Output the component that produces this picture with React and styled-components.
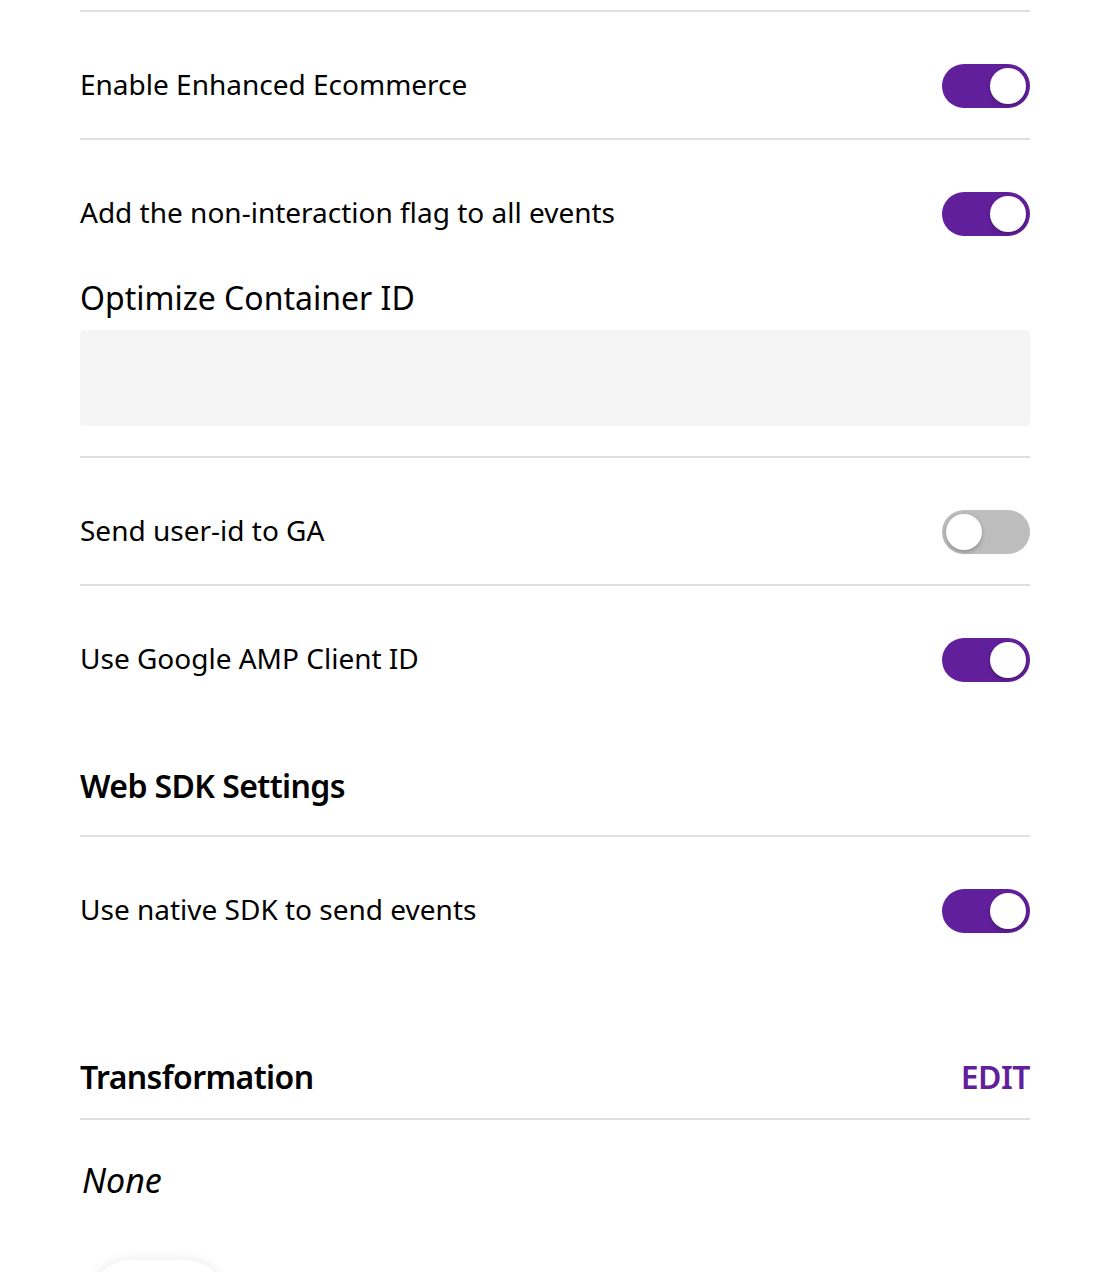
import React from "react";
import styled, { createGlobalStyle } from "styled-components";

const GlobalStyle = createGlobalStyle`
  body {
    margin: 0;
    background: #ffffff;
    font-family: "Noto Sans", "Open Sans", sans-serif;
    color: #000000;
    overflow: hidden;
  }
`;

const Page = styled.div`
  padding: 10px 66px 0 80px;
`;

const SettingRow = styled.div`
  display: flex;
  align-items: center;
  justify-content: space-between;
  border-top: 2px solid #e0e0e0;
  padding: 52px 0 30px;
`;

const SettingLabel = styled.span`
  font-size: 28px;
  line-height: 40px;
  padding-bottom: 4px;
`;

const Track = styled.button`
  position: relative;
  width: 88px;
  height: 44px;
  border: none;
  border-radius: 22px;
  padding: 0;
  cursor: pointer;
  background: ${(p) => (p.$on ? "#621f9c" : "#bdbdbd")};
  flex-shrink: 0;
`;

const Knob = styled.span`
  position: absolute;
  top: 4px;
  left: ${(p) => (p.$on ? "48px" : "4px")};
  width: 36px;
  height: 36px;
  border-radius: 50%;
  background: #ffffff;
  box-shadow: 0 2px 4px rgba(0, 0, 0, 0.25);
`;

const Field = styled.div`
  padding: 10px 0 30px;
`;

const FieldLabel = styled.label`
  display: block;
  font-size: 32px;
  line-height: 44px;
  margin-bottom: 10px;
`;

const TextInput = styled.input`
  display: block;
  box-sizing: border-box;
  width: 100%;
  height: 96px;
  border: none;
  border-radius: 4px;
  background: #f5f5f5;
  font-family: inherit;
  font-size: 28px;
  padding: 0 20px;
  outline: none;
`;

const SectionTitle = styled.h2`
  margin: 0;
  padding: ${(p) => p.$pad || "54px 0 29px"};
  font-size: 32px;
  line-height: 40px;
  font-weight: 600;
  letter-spacing: -0.6px;
`;

const SectionHeader = styled.div`
  display: flex;
  align-items: center;
  justify-content: space-between;
  border-bottom: 2px solid #e0e0e0;
  padding-top: 94px;
  padding-bottom: 21px;
`;

const EditLink = styled.a`
  color: #621f9c;
  font-size: 32px;
  line-height: 40px;
  font-weight: 600;
  letter-spacing: -0.5px;
  cursor: pointer;
`;

const EmptyNote = styled.p`
  margin: 40px 0 0 2px;
  font-size: 34px;
  line-height: 40px;
  font-style: italic;
`;

const PillButton = styled.button`
  display: block;
  width: 136px;
  height: 80px;
  margin: 60px 0 0 10px;
  border: none;
  border-radius: 40px;
  background: #ffffff;
  box-shadow: 0 2px 14px rgba(0, 0, 0, 0.12);
`;

const Toggle = ({ on }) => (
  <Track $on={on} aria-pressed={on}>
    <Knob $on={on} />
  </Track>
);

const Setting = ({ label, on }) => (
  <SettingRow>
    <SettingLabel>{label}</SettingLabel>
    <Toggle on={on} />
  </SettingRow>
);

export default function App() {
  return (
    <>
      <GlobalStyle />
      <Page>
        <Setting label="Enable Enhanced Ecommerce" on />
        <Setting label="Add the non-interaction flag to all events" on />
        <Field>
          <FieldLabel>Optimize Container ID</FieldLabel>
          <TextInput type="text" />
        </Field>
        <Setting label="Send user-id to GA" on={false} />
        <Setting label="Use Google AMP Client ID" on />
        <SectionTitle>Web SDK Settings</SectionTitle>
        <Setting label="Use native SDK to send events" on />
        <SectionHeader>
          <SectionTitle $pad="0">Transformation</SectionTitle>
          <EditLink>EDIT</EditLink>
        </SectionHeader>
        <EmptyNote>None</EmptyNote>
        <PillButton />
      </Page>
    </>
  );
}
